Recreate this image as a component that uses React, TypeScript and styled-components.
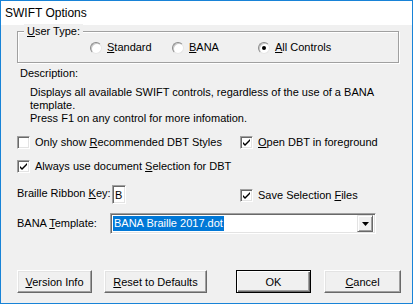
import React from "react";
import styled, { createGlobalStyle } from "styled-components";

const Global = createGlobalStyle`
  html, body { margin: 0; padding: 0; background: #ffffff; }
  body { font-family: "Liberation Sans", Arial, sans-serif; font-size: 11px; color: #000; }
  * { box-sizing: border-box; }
`;

const Window = styled.div`
  width: 413px;
  height: 304px;
  border: 1px solid #1883d7;
  display: flex;
  flex-direction: column;
  background: #f0f0f0;
`;

const TitleBar = styled.div`
  height: 24px;
  background: #ffffff;
  display: flex;
  align-items: center;
  padding-left: 4px;
  font-size: 12px;
  color: #000;
  flex: none;
`;

const Client = styled.div`
  flex: 1;
  display: flex;
  flex-direction: column;
  padding: 6px 0 0 16px;
`;

const GroupBox = styled.div`
  position: relative;
  width: 382px;
  height: 32px;
  border: 1px solid #a0a0a0;
  box-shadow: 1px 1px 0 #ffffff, inset 1px 1px 0 #ffffff;
  display: flex;
  align-items: center;
  padding-left: 72px;
  padding-top: 1px;
`;

const Legend = styled.span`
  position: absolute;
  left: 6px;
  top: -8px;
  padding: 0 3px;
  background: #f0f0f0;
  line-height: 14px;
`;

const RadioItem = styled.label<{ $w?: number }>`
  display: flex;
  align-items: center;
  width: ${(p) => (p.$w ? `${p.$w}px` : "auto")};
  gap: 5px;
  line-height: 13px;
`;

const RadioCircle = styled.span<{ $on?: boolean }>`
  width: 12px;
  height: 12px;
  border-radius: 50%;
  border: 1px solid;
  border-color: #8a8a8a #e6e6e6 #e6e6e6 #8a8a8a;
  background: #ffffff;
  box-shadow: inset 1px 1px 0 #c8c8c8;
  display: flex;
  align-items: center;
  justify-content: center;
  flex: none;
  &::after {
    content: "";
    width: 4px;
    height: 4px;
    border-radius: 50%;
    background: ${(p) => (p.$on ? "#000" : "transparent")};
  }
`;

const Row = styled.div<{ $mt: number; $align?: string }>`
  display: flex;
  align-items: ${(p) => p.$align || "center"};
  margin-top: ${(p) => p.$mt}px;
`;

const Text = styled.div<{ $mt: number; $ml: number }>`
  margin-top: ${(p) => p.$mt}px;
  margin-left: ${(p) => p.$ml}px;
  line-height: 13px;
`;

const CheckItem = styled.label<{ $w?: number; $mt?: number }>`
  display: flex;
  align-items: center;
  gap: 5px;
  width: ${(p) => (p.$w ? `${p.$w}px` : "auto")};
  margin-top: ${(p) => p.$mt || 0}px;
  line-height: 13px;
`;

const CheckBox = styled.span`
  width: 13px;
  height: 13px;
  border: 1px solid;
  border-color: #a0a0a0 #ffffff #ffffff #a0a0a0;
  box-shadow: inset 1px 1px 0 #696969, inset -1px -1px 0 #e3e3e3;
  background: #ffffff;
  display: flex;
  align-items: center;
  justify-content: center;
  flex: none;
`;

const U = styled.span`
  text-decoration: underline;
  text-underline-offset: 1px;
`;

const Label = styled.span<{ $w: number; $mt?: number }>`
  width: ${(p) => p.$w}px;
  margin-top: ${(p) => p.$mt || 0}px;
  line-height: 13px;
  flex: none;
`;

const KeyInput = styled.div`
  width: 14px;
  height: 19px;
  background: #ffffff;
  border: 1px solid;
  border-color: #a0a0a0 #ffffff #ffffff #a0a0a0;
  box-shadow: inset 1px 1px 0 #696969, inset -1px -1px 0 #e3e3e3;
  display: flex;
  align-items: center;
  padding-left: 2px;
  margin-left: 1px;
  margin-right: 114px;
`;

const Combo = styled.div`
  width: 266px;
  height: 21px;
  background: #ffffff;
  border: 1px solid;
  border-color: #a0a0a0 #ffffff #ffffff #a0a0a0;
  box-shadow: inset 1px 1px 0 #696969, inset -1px -1px 0 #e3e3e3;
  display: flex;
  align-items: center;
  padding: 2px;
`;

const Selected = styled.span`
  background: #0078d7;
  color: #ffffff;
  line-height: 15px;
  padding: 0 1px;
`;

const DropButton = styled.span`
  margin-left: auto;
  width: 16px;
  height: 17px;
  background: #f0f0f0;
  border: 1px solid;
  border-color: #e3e3e3 #696969 #696969 #e3e3e3;
  box-shadow: inset 1px 1px 0 #ffffff, inset -1px -1px 0 #a0a0a0;
  display: flex;
  align-items: center;
  justify-content: center;
`;

const Button = styled.button<{ $w: number; $ml: number; $def?: boolean }>`
  width: ${(p) => p.$w}px;
  height: 23px;
  margin-left: ${(p) => p.$ml}px;
  font-family: "Liberation Sans", Arial, sans-serif;
  font-size: 11px;
  color: #000;
  background: #f0f0f0;
  padding: 0;
  border: 1px solid;
  border-color: ${(p) => (p.$def ? "#000" : "#ffffff #696969 #696969 #ffffff")};
  box-shadow: ${(p) =>
    p.$def
      ? "inset 1px 1px 0 #ffffff, inset -1px -1px 0 #696969, inset -2px -2px 0 #a0a0a0"
      : "inset -1px -1px 0 #a0a0a0, inset 1px 1px 0 #e3e3e3"};
`;

const Check = () => (
  <svg width="9" height="9" viewBox="0 0 9 9">
    <path d="M1 4 L3 6 L8 1 L8 3 L3 8 L1 6 Z" fill="#000" />
  </svg>
);

const Arrow = () => (
  <svg width="7" height="4" viewBox="0 0 7 4">
    <path d="M0 0 H7 L3.5 4 Z" fill="#000" />
  </svg>
);

export default function App() {
  return (
    <>
      <Global />
      <Window>
        <TitleBar>SWIFT Options</TitleBar>
        <Client>
          <GroupBox>
            <Legend>
              <U>U</U>ser Type:
            </Legend>
            <RadioItem $w={82}>
              <RadioCircle />
              <span>
                <U>S</U>tandard
              </span>
            </RadioItem>
            <RadioItem $w={86}>
              <RadioCircle />
              <span>
                <U>B</U>ANA
              </span>
            </RadioItem>
            <RadioItem>
              <RadioCircle $on />
              <span>
                <U>A</U>ll Controls
              </span>
            </RadioItem>
          </GroupBox>
          <Text $mt={4} $ml={3}>Description:</Text>
          <Text $mt={6} $ml={13}>
            Displays all available SWIFT controls, regardless of the use of a BANA
            <br />
            template.
            <br />
            Press F1 on any control for more infomation.
          </Text>
          <Row $mt={11}>
            <CheckItem $w={223}>
              <CheckBox />
              <span>
                Only show <U>R</U>ecommended DBT Styles
              </span>
            </CheckItem>
            <CheckItem>
              <CheckBox>
                <Check />
              </CheckBox>
              <span>
                <U>O</U>pen DBT in foreground
              </span>
            </CheckItem>
          </Row>
          <Row $mt={11}>
            <CheckItem>
              <CheckBox>
                <Check />
              </CheckBox>
              <span>
                Always use document <U>S</U>election for DBT
              </span>
            </CheckItem>
          </Row>
          <Row $mt={12} $align="flex-start">
            <Label $w={94} $mt={2}>
              Braille Ribbon <U>K</U>ey:
            </Label>
            <KeyInput>B</KeyInput>
            <CheckItem $mt={4}>
              <CheckBox>
                <Check />
              </CheckBox>
              <span>
                Save Selection <U>F</U>iles
              </span>
            </CheckItem>
          </Row>
          <Row $mt={9}>
            <Label $w={93}>
              BANA <U>T</U>emplate:
            </Label>
            <Combo>
              <Selected>BANA Braille 2017.dot</Selected>
              <DropButton>
                <Arrow />
              </DropButton>
            </Combo>
          </Row>
          <Row $mt={36}>
            <Button $w={75} $ml={0}>
              <U>V</U>ersion Info
            </Button>
            <Button $w={103} $ml={12}>
              <U>R</U>eset to Defaults
            </Button>
            <Button $w={75} $ml={29} $def>
              OK
            </Button>
            <Button $w={77} $ml={13}>
              <U>C</U>ancel
            </Button>
          </Row>
        </Client>
      </Window>
    </>
  );
}
